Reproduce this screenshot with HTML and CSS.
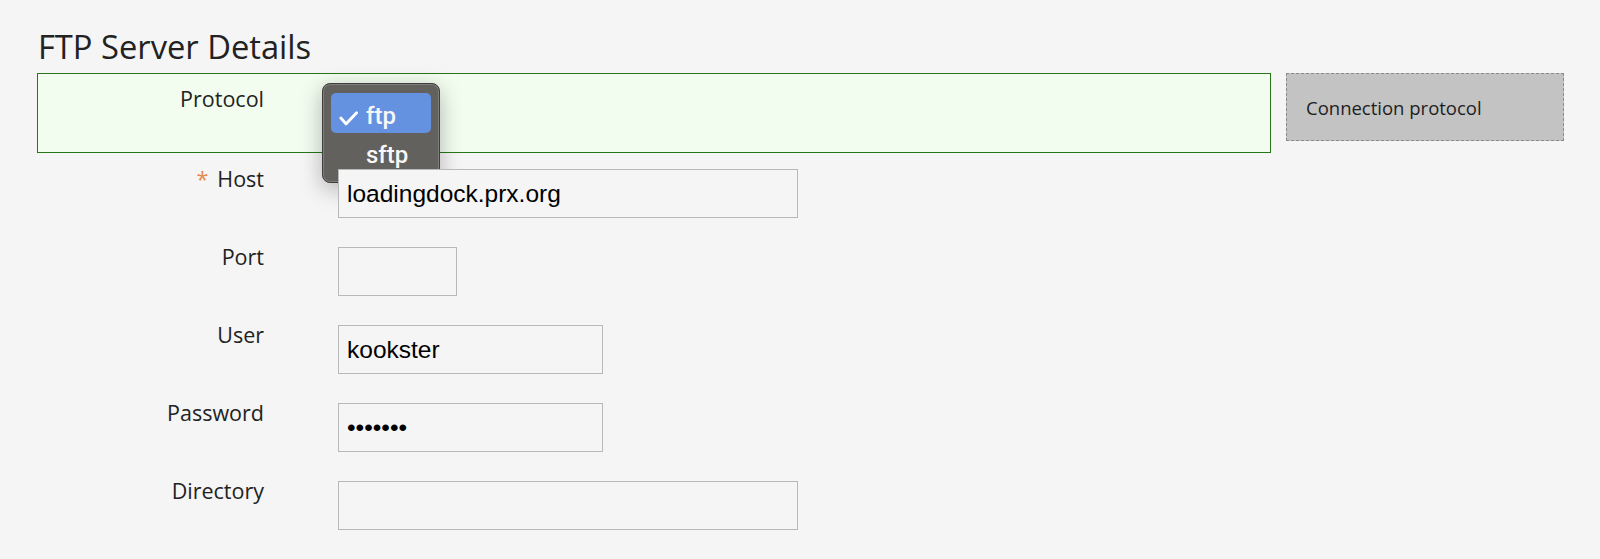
FILE: index.html
```html
<!DOCTYPE html>
<html lang="en">
<head>
<meta charset="utf-8">
<title>FTP Server Details</title>
<link rel="stylesheet" href="styles.css">
</head>
<body>
<main class="page">
  <h1 class="title">FTP Server Details</h1>
  <form class="form">
    <div class="row">
      <div class="field field-active">
        <label class="label">Protocol</label>
        <div class="control control-select"></div>
        <div class="popup">
          <div class="opt opt-selected">
            <svg class="check" viewBox="0 0 27 40" width="27" height="40" aria-hidden="true"><polyline points="9.9,25 15,30.9 25.6,19.7" fill="none" stroke="#ffffff" stroke-width="2.9" stroke-linecap="round" stroke-linejoin="round"/></svg>
            <span class="opt-text">ftp</span>
          </div>
          <div class="opt">
            <span class="check-space"></span>
            <span class="opt-text opt-text-2">sftp</span>
          </div>
        </div>
      </div>
      <div class="help">Connection protocol</div>
    </div>
    <div class="row">
      <div class="field">
        <label class="label"><span class="req">*</span>Host</label>
        <div class="control"><input class="input input-wide" type="text" value="loadingdock.prx.org"></div>
      </div>
      <div class="help-space"></div>
    </div>
    <div class="row">
      <div class="field">
        <label class="label">Port</label>
        <div class="control"><input class="input input-port" type="text" value=""></div>
      </div>
      <div class="help-space"></div>
    </div>
    <div class="row">
      <div class="field">
        <label class="label">User</label>
        <div class="control"><input class="input input-mid" type="text" value="kookster"></div>
      </div>
      <div class="help-space"></div>
    </div>
    <div class="row">
      <div class="field">
        <label class="label">Password</label>
        <div class="control"><input class="input input-mid" type="password" value="secret1"></div>
      </div>
      <div class="help-space"></div>
    </div>
    <div class="row">
      <div class="field">
        <label class="label">Directory</label>
        <div class="control"><input class="input input-wide" type="text" value=""></div>
      </div>
      <div class="help-space"></div>
    </div>
  </form>
</main>
</body>
</html>
```
FILE: styles.css
```css
* { box-sizing: border-box; }
html, body { margin: 0; padding: 0; }
body {
  background: #f5f5f5;
  font-family: "Open Sans", "DejaVu Sans", sans-serif;
  color: #222222;
}
.page {
  padding: 25px 36px 0 37px;
}
.title {
  margin: 0 0 4px 1px;
  font-size: 32.7px;
  line-height: 44px;
  font-weight: 400;
  color: #222222;
}
.form { display: block; margin: 0; }
.row {
  display: flex;
  gap: 15px;
  align-items: flex-start;
}
.field {
  flex: 1;
  position: relative;
  display: grid;
  grid-template-columns: 226px 1fr;
  column-gap: 74px;
  border: 1px solid transparent;
  padding: 15px 0 12px;
}
.field-active {
  border-color: #277619;
  background: #f2fcef;
  padding-bottom: 14px;
}
.label {
  text-align: right;
  font-size: 21.5px;
  line-height: 20px;
  color: #222222;
  white-space: nowrap;
}
.req {
  color: #e5894d;
  margin-right: 9px;
}
.control { display: flex; }
.control-select { height: 49px; }
.input {
  height: 49px;
  border: 1px solid #b9b9b9;
  background: #f5f5f5;
  padding: 0 8px;
  margin: 0;
  font-family: "Liberation Sans", Arial, sans-serif;
  font-size: 24.5px;
  color: #000000;
  outline: none;
  border-radius: 0;
}
.input-wide { width: 460px; }
.input-port { width: 119px; }
.input-mid { width: 265px; }
.help {
  width: 278px;
  height: 68px;
  display: flex;
  align-items: center;
  padding-left: 19px;
  background: #c3c3c3;
  border: 1px dashed #8a8a8a;
  font-size: 18.5px;
  color: #1e1e1e;
}
.help-space { width: 278px; }
.popup {
  position: absolute;
  left: 284px;
  top: 9px;
  width: 118px;
  height: 100px;
  padding: 9px 8px;
  background: #63615e;
  border: 1px solid #3f3e3c;
  border-radius: 8px;
  box-shadow: inset 0 0 0 1px #807e7b, 0 6px 22px rgba(0, 0, 0, 0.28);
  font-family: Roboto, "Liberation Sans", Arial, sans-serif;
  font-weight: 500;
  font-size: 24px;
  color: #f7f7f7;
}
.opt {
  display: flex;
  align-items: flex-start;
  height: 40px;
  border-radius: 5px;
}
.opt-selected { background: #6592e0; }
.check { width: 27px; height: 40px; flex-shrink: 0; display: block; }
.check-space { width: 27px; flex-shrink: 0; }
.opt-text {
  margin-left: 8px;
  line-height: 47px;
  height: 40px;
  overflow: visible;
}
.opt-text-2 { line-height: 45px; }
```
